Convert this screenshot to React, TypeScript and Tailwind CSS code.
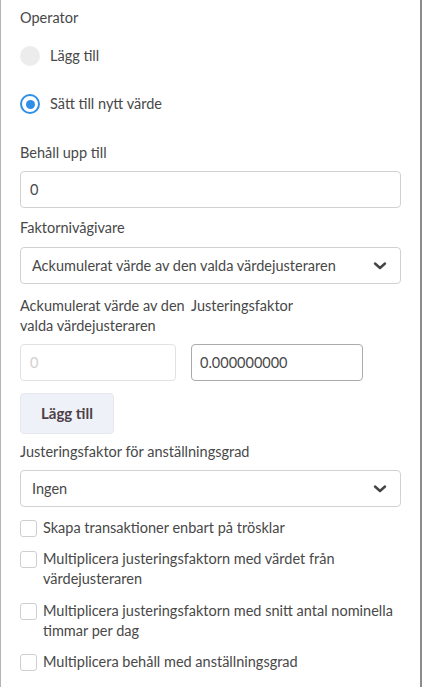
import React from "react";

const font = { fontFamily: "Lato, 'Noto Sans', sans-serif" };

function Chevron() {
  return (
    <svg width="14" height="10" viewBox="0 0 14 10" className="shrink-0">
      <path d="M2 2.5 L7 7 L12 2.5" fill="none" stroke="#444" strokeWidth="2.4" strokeLinecap="round" strokeLinejoin="round" />
    </svg>
  );
}

function Check({ lines }: { lines: string[] }) {
  return (
    <div className="flex items-start">
      <div className="mt-[2px] h-[17px] w-[17px] shrink-0 rounded-[3px] border border-[#cfcfcf] bg-white" />
      <div className="ml-[6px] whitespace-nowrap leading-[20px] text-[#484848]">
        {lines.map((l, i) => (
          <div key={i}>{l}</div>
        ))}
      </div>
    </div>
  );
}

export default function App() {
  return (
    <div
      style={font}
      className="h-[687px] w-[422px] overflow-hidden border-l border-r-2 border-l-[#b4b4b4] border-r-[#8c8c8c] bg-white pl-[19px] pr-[19px] text-[14.5px] text-[#484848]"
    >
      <div className="pt-[8px] leading-[20px]">Operator</div>
      <div className="mt-[4px] flex h-[48px] items-center">
        <div className="h-[20px] w-[20px] rounded-full bg-[#ececec]" />
        <span className="ml-[10px]">Lägg till</span>
      </div>
      <div className="flex h-[48px] items-center">
        <div className="flex h-[20px] w-[20px] items-center justify-center rounded-full border-[2.5px] border-[#2f8ee8] bg-white">
          <div className="h-[9px] w-[9px] rounded-full bg-[#2f8ee8]" />
        </div>
        <span className="ml-[10px]">Sätt till nytt värde</span>
      </div>

      <div className="mt-[15px] leading-[20px]">Behåll upp till</div>
      <div className="mt-[8px] flex h-[37px] items-center rounded-[4px] border border-[#d2d2d2] px-[9px]">0</div>

      <div className="mt-[10px] leading-[20px]">Faktornivågivare</div>
      <div className="mt-[9px] flex h-[37px] items-center justify-between rounded-[4px] border border-[#d2d2d2] pl-[11px] pr-[13px]">
        <span className="whitespace-nowrap">Ackumulerat värde av den valda värdejusteraren</span>
        <Chevron />
      </div>

      <div className="mt-[12px] flex">
        <div className="w-[156px] whitespace-nowrap leading-[20px]">
          Ackumulerat värde av den
          <br />
          valda värdejusteraren
        </div>
        <div className="ml-[15px] leading-[20px]">Justeringsfaktor</div>
      </div>
      <div className="mt-[8px] flex">
        <div className="flex h-[37px] w-[156px] items-center rounded-[4px] border border-[#e2e2e2] px-[9px] text-[#d0d0d0]">0</div>
        <div className="ml-[15px] flex h-[37px] w-[172px] items-center rounded-[4px] border border-[#ababab] px-[8px]">0.000000000</div>
      </div>

      <button className="mt-[12px] block h-[41px] w-[94px] rounded-[4px] border border-[#e6e8ee] bg-[#eef1f8] text-[15px] font-bold text-[#4e3f47]">
        Lägg till
      </button>

      <div className="mt-[8px] leading-[20px]">Justeringsfaktor för anställningsgrad</div>
      <div className="mt-[8px] flex h-[37px] items-center justify-between rounded-[4px] border border-[#d2d2d2] pl-[11px] pr-[13px]">
        <span>Ingen</span>
        <Chevron />
      </div>

      <div className="mt-[11px]">
        <Check lines={["Skapa transaktioner enbart på trösklar"]} />
      </div>
      <div className="mt-[11px]">
        <Check lines={["Multiplicera justeringsfaktorn med värdet från", "värdejusteraren"]} />
      </div>
      <div className="mt-[12px]">
        <Check lines={["Multiplicera justeringsfaktorn med snitt antal nominella", "timmar per dag"]} />
      </div>
      <div className="mt-[11px]">
        <Check lines={["Multiplicera behåll med anställningsgrad"]} />
      </div>
    </div>
  );
}
